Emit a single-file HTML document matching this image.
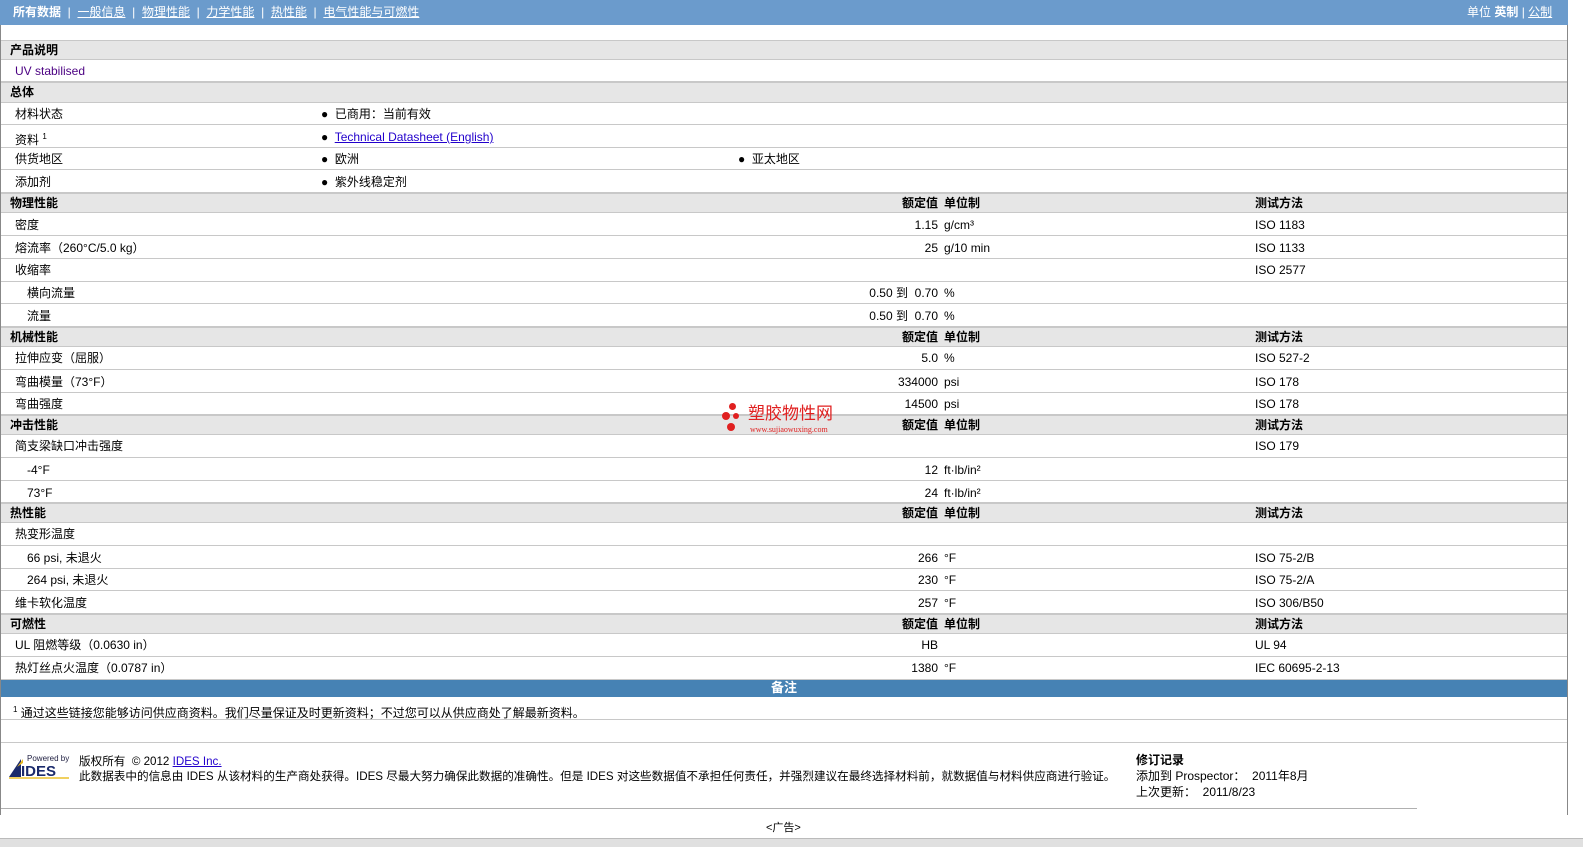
<!DOCTYPE html>
<html><head><meta charset="utf-8"><style>
*{margin:0;padding:0;box-sizing:border-box}
body{width:1583px;height:847px;background:#fff;font-family:"Liberation Sans","Noto Sans CJK SC",sans-serif;font-size:12px;color:#000;position:relative;overflow:hidden}
.top{position:absolute;left:0;top:0;width:1568px;height:25px;background:#6b9bcc;color:#fff;font-size:12px;line-height:25px}
.top a{color:#fff;text-decoration:underline}
.r{position:absolute;left:1px;width:1566px;border-bottom:1px solid #c8c8c8}
.h{background:#e6e6e6;font-weight:bold;border-top:1px solid #c8c8c8}
.r span{position:absolute;white-space:nowrap}
.v{right:629px;text-align:right}
.u{left:943px}
.m{left:1254px}
.frame{position:absolute;left:0;top:25px;width:1568px;height:790px;border-left:1px solid #888;border-right:1px solid #888}
</style></head><body>
<div class="frame"></div>
<div class="top"><span style="position:absolute;left:13px"><b>所有数据</b> &nbsp;| &nbsp;<a>一般信息</a> &nbsp;| &nbsp;<a>物理性能</a> &nbsp;| &nbsp;<a>力学性能</a> &nbsp;| &nbsp;<a>热性能</a> &nbsp;| &nbsp;<a>电气性能与可燃性</a></span><span style="position:absolute;left:1467px">单位 <b>英制</b> | <a>公制</a></span></div>

<div class="r h" style="top:40px;height:20px;line-height:19px"><span style="left:9px">产品说明</span></div>
<div class="r" style="top:60px;height:22px;line-height:23px"><span style="left:14px;color:#4b0082">UV stabilised</span></div>
<div class="r h" style="top:82px;height:21px;line-height:19px"><span style="left:9px">总体</span></div>
<div class="r" style="top:103px;height:22px;line-height:22px"><span style="left:14px">材料状态</span><span style="left:320px">●&nbsp; 已商用：当前有效</span></div>
<div class="r" style="top:125px;height:23px;line-height:24px"><span style="left:14px">资料 <sup style="font-size:8px">1</sup></span><span style="left:320px">●&nbsp; <u style="color:#2200cc">Technical Datasheet (English)</u></span></div>
<div class="r" style="top:148px;height:22px;line-height:22px"><span style="left:14px">供货地区</span><span style="left:320px">●&nbsp; 欧洲</span><span style="left:737px">●&nbsp; 亚太地区</span></div>
<div class="r" style="top:170px;height:23px;line-height:24px"><span style="left:14px">添加剂</span><span style="left:320px">●&nbsp; 紫外线稳定剂</span></div>

<div class="r h" style="top:193px;height:20px;line-height:18px"><span style="left:9px">物理性能</span><span class="v">额定值</span><span class="u">单位制</span><span class="m">测试方法</span></div>
<div class="r" style="top:213px;height:23px;line-height:24px"><span style="left:14px">密度</span><span class="v">1.15</span><span class="u">g/cm³</span><span class="m">ISO 1183</span></div>
<div class="r" style="top:236px;height:23px;line-height:24px"><span style="left:14px">熔流率（260°C/5.0 kg）</span><span class="v">25</span><span class="u">g/10 min</span><span class="m">ISO 1133</span></div>
<div class="r" style="top:259px;height:23px;line-height:22px"><span style="left:14px">收缩率</span><span class="m">ISO 2577</span></div>
<div class="r" style="top:282px;height:22px;line-height:22px"><span style="left:26px">横向流量</span><span class="v">0.50 到&nbsp; 0.70</span><span class="u">%</span></div>
<div class="r" style="top:304px;height:23px;line-height:24px"><span style="left:26px">流量</span><span class="v">0.50 到&nbsp; 0.70</span><span class="u">%</span></div>

<div class="r h" style="top:327px;height:20px;line-height:18px"><span style="left:9px">机械性能</span><span class="v">额定值</span><span class="u">单位制</span><span class="m">测试方法</span></div>
<div class="r" style="top:347px;height:23px;line-height:22px"><span style="left:14px">拉伸应变（屈服）</span><span class="v">5.0</span><span class="u">%</span><span class="m">ISO 527-2</span></div>
<div class="r" style="top:370px;height:23px;line-height:24px"><span style="left:14px">弯曲模量（73°F）</span><span class="v">334000</span><span class="u">psi</span><span class="m">ISO 178</span></div>
<div class="r" style="top:393px;height:22px;line-height:23px"><span style="left:14px">弯曲强度</span><span class="v">14500</span><span class="u">psi</span><span class="m">ISO 178</span></div>

<div class="r h" style="top:415px;height:20px;line-height:18px"><span style="left:9px">冲击性能</span><span class="v">额定值</span><span class="u">单位制</span><span class="m">测试方法</span></div>
<div class="r" style="top:435px;height:23px;line-height:22px"><span style="left:14px">简支梁缺口冲击强度</span><span class="m">ISO 179</span></div>
<div class="r" style="top:458px;height:23px;line-height:24px"><span style="left:26px">-4°F</span><span class="v">12</span><span class="u">ft·lb/in²</span></div>
<div class="r" style="top:481px;height:22px;line-height:24px"><span style="left:26px">73°F</span><span class="v">24</span><span class="u">ft·lb/in²</span></div>

<div class="r h" style="top:503px;height:20px;line-height:18px"><span style="left:9px">热性能</span><span class="v">额定值</span><span class="u">单位制</span><span class="m">测试方法</span></div>
<div class="r" style="top:523px;height:23px;line-height:22px"><span style="left:14px">热变形温度</span></div>
<div class="r" style="top:546px;height:23px;line-height:24px"><span style="left:26px">66 psi, 未退火</span><span class="v">266</span><span class="u">°F</span><span class="m">ISO 75-2/B</span></div>
<div class="r" style="top:569px;height:22px;line-height:23px"><span style="left:26px">264 psi, 未退火</span><span class="v">230</span><span class="u">°F</span><span class="m">ISO 75-2/A</span></div>
<div class="r" style="top:591px;height:23px;line-height:24px"><span style="left:14px">维卡软化温度</span><span class="v">257</span><span class="u">°F</span><span class="m">ISO 306/B50</span></div>

<div class="r h" style="top:614px;height:20px;line-height:18px"><span style="left:9px">可燃性</span><span class="v">额定值</span><span class="u">单位制</span><span class="m">测试方法</span></div>
<div class="r" style="top:634px;height:23px;line-height:23px"><span style="left:14px">UL 阻燃等级（0.0630 in）</span><span class="v">HB</span><span class="m">UL 94</span></div>
<div class="r" style="top:657px;height:23px;line-height:23px"><span style="left:14px">热灯丝点火温度（0.0787 in）</span><span class="v">1380</span><span class="u">°F</span><span class="m">IEC 60695-2-13</span></div>

<div style="position:absolute;left:1px;top:680px;width:1566px;height:17px;background:#4682b4;color:#fff;font-weight:bold;text-align:center;line-height:16px;font-size:13px">备注</div>
<div class="r" style="top:697px;height:23px;line-height:26px"><span style="left:12px"><sup style="font-size:8px">1</sup> 通过这些链接您能够访问供应商资料。我们尽量保证及时更新资料；不过您可以从供应商处了解最新资料。</span></div>
<div class="r" style="top:720px;height:23px"></div>

<svg style="position:absolute;left:7px;top:753px" width="64" height="26" viewBox="0 0 64 26"><text x="20" y="8" font-size="8" fill="#224" font-family="Liberation Sans">Powered by</text><polygon points="2,24 14,6 14,24" fill="#1a2a6c"/><polygon points="10,14 16,6 16,10" fill="#e8b820"/><text x="14" y="23" font-size="15" font-weight="bold" fill="#1a2a6c" font-family="Liberation Sans">IDES</text><rect x="2" y="24" width="60" height="2" fill="#f0d060"/></svg>
<div style="position:absolute;left:79px;top:754px;line-height:15px;font-size:11.6px;white-space:nowrap">版权所有 &nbsp;© 2012 <u style="color:#2200cc">IDES Inc.</u><br>此数据表中的信息由 IDES 从该材料的生产商处获得。IDES 尽最大努力确保此数据的准确性。但是 IDES 对这些数据值不承担任何责任，并强烈建议在最终选择材料前，就数据值与材料供应商进行验证。</div>
<div style="position:absolute;left:1136px;top:752px;line-height:16px"><b>修订记录</b><br>添加到 Prospector： &nbsp;2011年8月<br>上次更新： &nbsp;2011/8/23</div>
<div style="position:absolute;left:1px;top:808px;width:1416px;border-top:1px solid #b0b0b0"></div>
<div style="position:absolute;left:766px;top:819px;font-size:11px">&lt;广告&gt;</div>
<div style="position:absolute;left:0;top:838px;width:1583px;height:9px;background:#e0e0e0;border-top:1px solid #bbb"></div>

<div style="position:absolute;left:722px;top:403px;width:20px;height:32px">
<div style="position:absolute;left:7px;top:0;width:7px;height:7px;border-radius:50%;background:#e02020"></div>
<div style="position:absolute;left:0;top:9px;width:8px;height:8px;border-radius:50%;background:#e02020"></div>
<div style="position:absolute;left:11px;top:10px;width:6px;height:6px;border-radius:50%;background:#e02020"></div>
<div style="position:absolute;left:5px;top:20px;width:8px;height:8px;border-radius:50%;background:#e02020"></div></div>
<div style="position:absolute;left:748px;top:404px;color:#e02020;font-size:17px;line-height:20px">塑胶物性网</div>
<div style="position:absolute;left:750px;top:425px;color:#e02020;font-size:8px;font-family:'Liberation Serif',serif">www.sujiaowuxing.com</div>
</body></html>
